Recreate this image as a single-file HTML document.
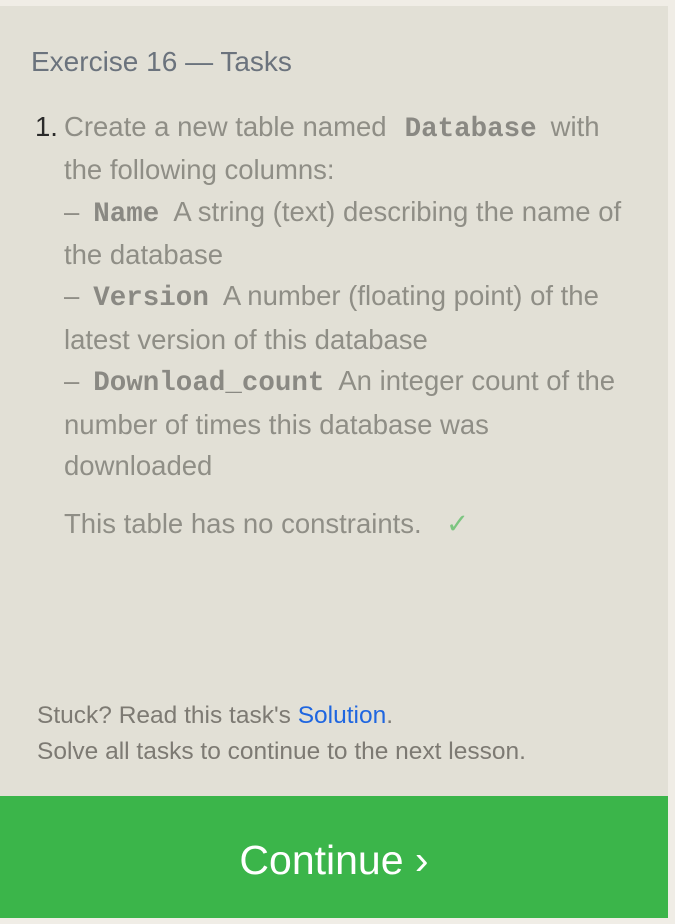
<!DOCTYPE html>
<html><head><meta charset="utf-8"><style>
html,body{margin:0;padding:0;width:675px;height:918px;overflow:hidden;background:#f0ede6;font-family:"Liberation Sans",sans-serif}
#p{position:absolute;left:0;top:6px;width:668px;height:912px;background:#e2e0d6}
.l{position:absolute;white-space:nowrap;line-height:30px;font-size:27.5px;color:#8f8e86}
code{font-family:"Liberation Mono",monospace;font-weight:bold;font-size:27.5px;color:#8a8983;margin:0 14px 0 18px}
code.d{margin-left:14px}
#btn{position:absolute;left:0;top:796px;width:668px;height:122px;background:#3bb54a;color:#fff;font-size:41px;text-align:center;line-height:128px}
.f{position:absolute;left:37px;white-space:nowrap;font-size:24.5px;color:#7d7a73;line-height:26px}
</style></head><body>
<div id="p"></div>
<div class="l" style="left:31px;top:47px;font-size:28px;color:#6b737d">Exercise 16 — Tasks</div>
<div class="l" style="left:35px;top:112px;color:#2a2a2a">1.</div>
<div class="l" style="left:64px;top:112px">Create a new table named<code>Database</code>with</div>
<div class="l" style="left:64px;top:155px">the following columns:</div>
<div class="l" style="left:64px;top:197px">–<code class="d">Name</code>A string (text) describing the name of</div>
<div class="l" style="left:64px;top:240px">the database</div>
<div class="l" style="left:64px;top:281px">–<code class="d">Version</code>A number (floating point) of the</div>
<div class="l" style="left:64px;top:325px">latest version of this database</div>
<div class="l" style="left:64px;top:366px">–<code class="d">Download_count</code>An integer count of the</div>
<div class="l" style="left:64px;top:410px">number of times this database was</div>
<div class="l" style="left:64px;top:451px">downloaded</div>
<div class="l" style="left:64px;top:509px">This table has no constraints.</div>
<div class="l" style="left:446px;top:509px;color:#7cc580">✓</div>
<div class="f" style="top:703px">Stuck? Read this task's <span style="color:#1f66e0">Solution</span>.</div>
<div class="f" style="top:739px">Solve all tasks to continue to the next lesson.</div>
<div id="btn">Continue ›</div>
</body></html>
